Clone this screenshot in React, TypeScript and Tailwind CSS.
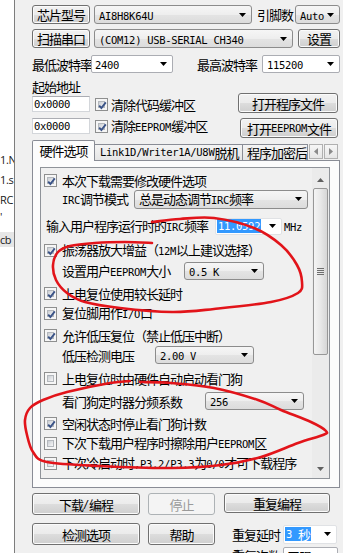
import React from "react";

const ASC = "font-['DejaVu_Sans_Mono',monospace] text-[10.5px] tracking-[-0.3px]";

function T({ t }: { t: string }) {
  const parts = t.split(/([\x20-\x7e]+)/);
  return (
    <>
      {parts.map((p, i) =>
        p === "" ? null : /^[\x20-\x7e]+$/.test(p) ? (
          <span key={i} className={ASC}>
            {p}
          </span>
        ) : (
          <span key={i}>{p}</span>
        )
      )}
    </>
  );
}

function Arrow({ color = "#000" }: { color?: string }) {
  return (
    <svg width="7" height="4" viewBox="0 0 7 4" className="shrink-0">
      <path d="M0 0H7L3.5 4Z" fill={color} />
    </svg>
  );
}

function Btn({ className = "", t }: { className?: string; t: string }) {
  return (
    <div
      className={`flex items-center justify-center rounded-[3px] border border-[#707070] bg-[linear-gradient(#f2f2f2,#ebebeb_50%,#dddddd_51%,#cfcfcf)] shadow-[inset_0_0_0_1px_#fbfbfb] whitespace-pre shrink-0 ${className}`}
    >
      <T t={t} />
    </div>
  );
}

function Drop({ className = "", t }: { className?: string; t: string }) {
  return (
    <div
      className={`flex items-center justify-between rounded-[3px] border border-[#8c8c8c] bg-[linear-gradient(#f6f6f6,#eeeeee_50%,#e4e4e4_51%,#dcdcdc)] pl-[4px] pr-[5px] whitespace-pre shrink-0 ${className}`}
    >
      <span>
        <T t={t} />
      </span>
      <Arrow />
    </div>
  );
}

function Edit({ className = "", t, sel = false }: { className?: string; t: string; sel?: boolean }) {
  return (
    <div
      className={`flex items-center justify-between rounded-[2px] border border-[#abadb3] bg-white pl-[1px] pr-[5px] whitespace-pre shrink-0 ${className}`}
    >
      <span className={sel ? "flex h-[14px] items-center bg-[#3399ff] px-[1px] text-white" : "pl-[2px]"}>
        <T t={t} />
      </span>
      <Arrow />
    </div>
  );
}

function CB({ on }: { on: boolean }) {
  return (
    <span className="relative flex h-[13px] w-[13px] shrink-0 border border-[#8e8f8f] bg-[#f6f6f6] p-[2px]">
      <span className="flex-1 border border-[#b4b8bd] bg-[linear-gradient(135deg,#c9cdd3,#f7f7f7)]" />
      {on && (
        <svg className="absolute left-[1px] top-[1px]" width="11" height="11" viewBox="0 0 11 11">
          <path d="M2.2 5.6L4.4 8L8.8 2.4" fill="none" stroke="#3b5488" strokeWidth="1.9" />
        </svg>
      )}
    </span>
  );
}

function CRow({ on, t, className = "" }: { on: boolean; t: string; className?: string }) {
  return (
    <div className={`flex h-[18px] shrink-0 items-center pl-[3px] ${className}`}>
      <CB on={on} />
      <span className="ml-[5px] whitespace-pre">
        <T t={t} />
      </span>
    </div>
  );
}

function smooth(pts: number[][]) {
  let d = `M${pts[0][0]},${pts[0][1]}`;
  for (let i = 0; i < pts.length - 1; i++) {
    const p0 = pts[i - 1] || pts[i];
    const p1 = pts[i];
    const p2 = pts[i + 1];
    const p3 = pts[i + 2] || p2;
    const c1x = p1[0] + (p2[0] - p0[0]) / 6;
    const c1y = p1[1] + (p2[1] - p0[1]) / 6;
    const c2x = p2[0] - (p3[0] - p1[0]) / 6;
    const c2y = p2[1] - (p3[1] - p1[1]) / 6;
    d += ` C${c1x.toFixed(1)},${c1y.toFixed(1)} ${c2x.toFixed(1)},${c2y.toFixed(1)} ${p2[0]},${p2[1]}`;
  }
  return d;
}

const loop1 = [
  [152, 222], [180, 219], [214, 218], [254, 228], [281, 245], [297, 265], [302, 282], [298, 293],
  [271, 302], [214, 309], [172, 312], [120, 308], [85, 302], [67, 293], [56, 280], [53, 265],
  [58, 252], [70, 246], [95, 243], [125, 242], [152, 243],
];
const loop2 = [
  [130, 381], [110, 383], [67, 392], [43, 400], [30, 408], [25, 420], [27, 435], [33, 452],
  [47, 462], [100, 466], [172, 468], [221, 465], [261, 457], [298, 443], [323, 435], [326, 431],
  [311, 422], [281, 410], [258, 400], [214, 388], [171, 383], [140, 382],
];

export default function App() {
  return (
    <div className="relative flex h-[553px] w-[343px] overflow-hidden bg-[#f0f0f0] font-['Noto_Sans_CJK_SC',sans-serif] text-[13px] leading-none tracking-[-1px] text-black">
      {/* left neighbouring window */}
      <div className="w-[14px] shrink-0 overflow-hidden bg-white pt-[149px] font-['Open_Sans',sans-serif] text-[11px] tracking-[-0.4px] text-[#202020]">
        <div className="flex h-[20px] items-center whitespace-nowrap">1.N</div>
        <div className="flex h-[20px] items-center whitespace-nowrap">1.s</div>
        <div className="flex h-[20px] items-center whitespace-nowrap">RC</div>
        <div className="flex h-[20px] items-start whitespace-nowrap pt-[2px]">'</div>
        <div className="flex h-[20px] items-center">
          <div className="flex h-[15px] w-full items-center whitespace-nowrap bg-[#e6e6e6]">cb</div>
        </div>
      </div>
      <div className="w-px shrink-0 bg-[#7d7d7d]" />

      {/* main window */}
      <div className="flex min-w-0 flex-1 flex-col pl-[17px] pr-[3px] pt-[5px]">
        {/* row 1 */}
        <div className="flex h-[19px] shrink-0 items-center">
          <Btn className="h-[19px] w-[58px]" t="芯片型号" />
          <Drop className="ml-[4px] h-[19px] w-[158px]" t="AI8H8K64U" />
          <span className="ml-[5px] w-[36px] whitespace-pre">引脚数</span>
          <Drop className="ml-[2px] h-[19px] w-[45px] pl-[3px]" t="Auto" />
        </div>
        {/* row 2 */}
        <div className="mt-[5px] flex h-[19px] shrink-0 items-center">
          <Btn className="h-[19px] w-[58px]" t="扫描串口" />
          <Drop className="ml-[4px] h-[19px] w-[199px]" t="(COM12) USB-SERIAL CH340" />
          <Btn className="ml-[5px] h-[19px] w-[42px]" t="设置" />
        </div>
        {/* row 3 */}
        <div className="mt-[7px] flex h-[18px] shrink-0 items-center">
          <span className="w-[59px] whitespace-pre">最低波特率</span>
          <Edit className="h-[18px] w-[82px]" t="2400" />
          <span className="ml-[24px] w-[60px] whitespace-pre">最高波特率</span>
          <Edit className="ml-[5px] h-[18px] w-[78px] pl-[2px]" t="115200" />
        </div>
        {/* rows 4-6 */}
        <div className="mt-[5px] flex h-[60px] shrink-0">
          <div className="flex flex-col">
            <div className="flex h-[17px] items-center">起始地址</div>
            <div className="mt-[1px] flex h-[16px] items-center">
              <div className="flex h-[16px] w-[58px] items-center border border-[#d3d6da] border-t-[#abadb3] bg-white pl-[1px]">
                <T t="0x0000" />
              </div>
              <span className="ml-[5px]">
                <CB on />
              </span>
              <span className="ml-[3px] whitespace-pre">清除代码缓冲区</span>
            </div>
            <div className="mt-[6px] flex h-[16px] items-center">
              <div className="flex h-[16px] w-[58px] items-center border border-[#d3d6da] border-t-[#abadb3] bg-white pl-[1px]">
                <T t="0x0000" />
              </div>
              <span className="ml-[5px]">
                <CB on />
              </span>
              <span className="ml-[3px] whitespace-pre">
                <T t="清除EEPROM缓冲区" />
              </span>
            </div>
          </div>
          <div className="ml-auto mr-[2px] flex flex-col items-end pt-[15px]">
            <Btn className="h-[20px] w-[100px]" t="打开程序文件" />
            <Btn className="mt-[5px] h-[20px] w-[98px]" t="打开EEPROM文件" />
          </div>
        </div>

        {/* tab strip */}
        <div className="relative z-10 mt-[2px] flex h-[20px] shrink-0 items-end">
          <div className="-mb-px flex h-[21px] w-[63px] items-center justify-center rounded-t-[2px] border border-b-0 border-[#898c95] bg-[#fcfcfc] pb-[1px]">
            硬件选项
          </div>
          <div className="flex h-[16px] w-[148px] items-center whitespace-pre border-r border-t border-[#898c95] bg-[linear-gradient(#f4f4f4,#e5e5e5)] pl-[5px]">
            <T t="Link1D/Writer1A/U8W脱机" />
          </div>
          <div className="flex h-[16px] w-[65px] items-center overflow-hidden whitespace-pre border-r border-t border-[#898c95] bg-[linear-gradient(#f4f4f4,#e5e5e5)] pl-[4px]">
            程序加密后
          </div>
          <div className="mb-[1px] ml-[1px] flex gap-[1px] self-end">
            <div className="flex h-[15px] w-[14px] items-center justify-center border border-[#b0b0b0] bg-[linear-gradient(#f6f6f6,#e6e6e6)]">
              <svg width="4" height="7" viewBox="0 0 4 7">
                <path d="M4 0V7L0 3.5Z" fill="#8a8a8a" />
              </svg>
            </div>
            <div className="flex h-[15px] w-[14px] items-center justify-center border border-[#b0b0b0] bg-[linear-gradient(#f6f6f6,#e6e6e6)]">
              <svg width="4" height="7" viewBox="0 0 4 7">
                <path d="M0 0V7L4 3.5Z" fill="#8a8a8a" />
              </svg>
            </div>
          </div>
        </div>

        {/* tab panel */}
        <div className="flex h-[328px] shrink-0 flex-col border border-[#898c95] bg-[#fcfcfc] pl-[7px] pr-[9px] pt-[6px]">
          <div className="flex h-[312px] shrink-0 border border-[#8f9399] bg-[#f0f0f0]">
            <div className="flex min-w-0 flex-1 flex-col pt-[3px]">
              <CRow on t="本次下载需要修改硬件选项" />
              <div className="mt-[1px] flex h-[18px] shrink-0 items-center pl-[21px]">
                <span className="w-[72px] whitespace-pre">
                  <T t="IRC调节模式" />
                </span>
                <Drop className="h-[19px] w-[174px]" t="总是动态调节IRC频率" />
              </div>
              <div className="mt-[9px] flex h-[18px] shrink-0 items-center pl-[5px]">
                <span className="w-[169px] whitespace-pre">
                  <T t="输入用户程序运行时的IRC频率" />
                </span>
                <Edit className="h-[17px] w-[67px] border-[#e0e2e5] pr-[4px]" t="11.0592" sel />
                <span className="ml-[2px]">
                  <T t="MHz" />
                </span>
              </div>
              <CRow className="mt-[6px]" on t="振荡器放大增益（12M以上建议选择）" />
              <div className="mt-[3px] flex h-[18px] shrink-0 items-center pl-[21px]">
                <span className="w-[122px] whitespace-pre">
                  <T t="设置用户EEPROM大小" />
                </span>
                <Drop className="h-[18px] w-[80px]" t="0.5 K" />
              </div>
              <CRow className="mt-[4px]" on t="上电复位使用较长延时" />
              <CRow className="mt-[2px]" on t="复位脚用作I/O口" />
              <CRow className="mt-[4px]" on t="允许低压复位（禁止低压中断）" />
              <div className="mt-[2px] flex h-[18px] shrink-0 items-center pl-[21px]">
                <span className="w-[93px] whitespace-pre">低压检测电压</span>
                <Drop className="h-[18px] w-[99px]" t="2.00 V" />
              </div>
              <CRow className="mt-[5px]" on={false} t="上电复位时由硬件自动启动看门狗" />
              <div className="mt-[5px] flex h-[18px] shrink-0 items-center pl-[21px]">
                <span className="w-[143px] whitespace-pre">看门狗定时器分频系数</span>
                <Drop className="h-[18px] w-[99px]" t="256" />
              </div>
              <CRow className="mt-[4px]" on t="空闲状态时停止看门狗计数" />
              <CRow className="mt-[2px]" on={false} t="下次下载用户程序时擦除用户EEPROM区" />
              <CRow className="mt-[2px]" on={false} t="下次冷启动时,P3.2/P3.3为0/0才可下载程序" />
            </div>
            {/* scrollbar */}
            <div className="flex w-[17px] shrink-0 flex-col bg-[#ebebeb]">
              <div className="flex h-[20px] shrink-0 justify-center pt-[10px]">
                <svg width="7" height="4" viewBox="0 0 7 4">
                  <path d="M0 4H7L3.5 0Z" fill="#606060" />
                </svg>
              </div>
              <div className="mx-[1px] flex h-[167px] shrink-0 items-center justify-center rounded-[2px] border border-[#979797] bg-[linear-gradient(90deg,#f4f4f4,#e8e8e8_50%,#d6d6d6)]">
                <svg width="7" height="7" viewBox="0 0 7 7">
                  <path d="M0 0.5H7M0 2.5H7M0 4.5H7M0 6.5H7" stroke="#6e6e6e" strokeWidth="1" />
                </svg>
              </div>
              <div className="flex-1" />
              <div className="flex h-[16px] shrink-0 justify-center pt-[5px]">
                <svg width="7" height="4" viewBox="0 0 7 4">
                  <path d="M0 0H7L3.5 4Z" fill="#606060" />
                </svg>
              </div>
            </div>
          </div>
        </div>

        {/* bottom buttons */}
        <div className="mt-[5px] flex shrink-0 items-start">
          <Btn className="h-[22px] w-[108px]" t="下载/编程" />
          <div className="ml-[8px] flex h-[22px] w-[67px] shrink-0 items-center justify-center rounded-[3px] border border-[#adb2b5] bg-[#f4f4f4] text-[#9a9a9a]">
            停止
          </div>
          <Btn className="ml-[9px] h-[20px] w-[106px]" t="重复编程" />
        </div>
        <div className="mt-[8px] flex shrink-0 items-center">
          <Btn className="h-[22px] w-[108px]" t="检测选项" />
          <Btn className="ml-[8px] h-[22px] w-[67px]" t="帮助" />
          <span className="ml-[17px] w-[48px] whitespace-pre">重复延时</span>
          <Edit className="ml-[3px] h-[19px] w-[54px] border-[#e0e2e5]" t="3 秒" sel />
        </div>
        <div className="mt-[2px] flex shrink-0 items-start pl-[200px]">
          <span className="mt-[2px] w-[50px] whitespace-pre">重复次数</span>
          <Edit className="ml-[1px] h-[19px] w-[55px]" t="无限" />
        </div>
      </div>

      {/* red hand-drawn annotation */}
      <svg className="pointer-events-none absolute left-0 top-0 z-20" width="343" height="553" viewBox="0 0 343 553">
        <path d={smooth(loop1)} fill="none" stroke="#e2141a" strokeWidth="2.6" strokeLinecap="round" strokeLinejoin="round" />
        <path d={smooth(loop2)} fill="none" stroke="#e2141a" strokeWidth="2.6" strokeLinecap="round" strokeLinejoin="round" />
      </svg>
    </div>
  );
}
